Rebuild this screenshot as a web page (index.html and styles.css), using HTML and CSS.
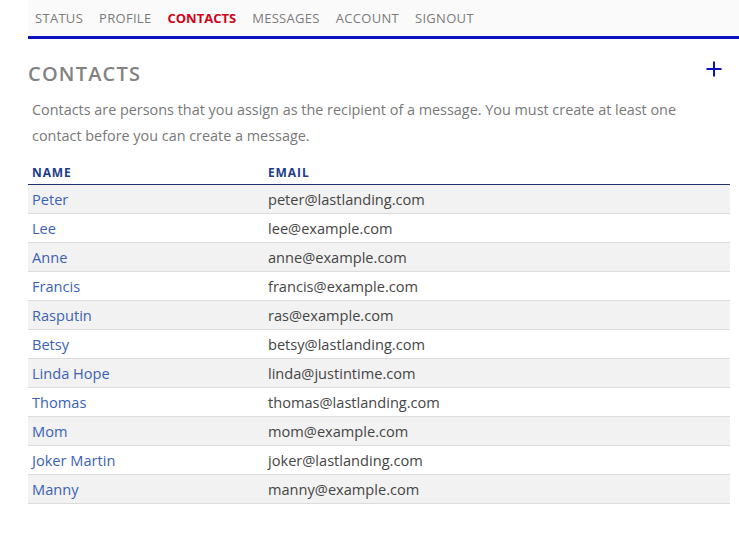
FILE: index.html
```html
<!DOCTYPE html>
<html>
<head>
<meta charset="utf-8">
<link rel="stylesheet" href="styles.css">
</head>
<body>
<div class="page">
  <nav class="nav">
    <a class="nav-item">STATUS</a>
    <a class="nav-item">PROFILE</a>
    <a class="nav-item active">CONTACTS</a>
    <a class="nav-item">MESSAGES</a>
    <a class="nav-item">ACCOUNT</a>
    <a class="nav-item">SIGNOUT</a>
  </nav>
  <main class="content">
    <div class="title-row">
      <h1 class="title">CONTACTS</h1>
      <a class="add" aria-label="Add contact">
        <svg width="16" height="16" viewBox="0 0 16 16"><path d="M8 0.5V15.5M0.5 8H15.5" stroke="#0a0fc4" stroke-width="2" fill="none"/></svg>
      </a>
    </div>
    <p class="intro">Contacts are persons that you assign as the recipient of a message. You must create at least one contact before you can create a message.</p>
    <table class="contacts">
      <thead>
        <tr><th class="col-name">NAME</th><th>EMAIL</th></tr>
      </thead>
      <tbody>
        <tr><td><a class="name">Peter</a></td><td>peter@lastlanding.com</td></tr>
        <tr><td><a class="name">Lee</a></td><td>lee@example.com</td></tr>
        <tr><td><a class="name">Anne</a></td><td>anne@example.com</td></tr>
        <tr><td><a class="name">Francis</a></td><td>francis@example.com</td></tr>
        <tr><td><a class="name">Rasputin</a></td><td>ras@example.com</td></tr>
        <tr><td><a class="name">Betsy</a></td><td>betsy@lastlanding.com</td></tr>
        <tr><td><a class="name">Linda Hope</a></td><td>linda@justintime.com</td></tr>
        <tr><td><a class="name">Thomas</a></td><td>thomas@lastlanding.com</td></tr>
        <tr><td><a class="name">Mom</a></td><td>mom@example.com</td></tr>
        <tr><td><a class="name">Joker Martin</a></td><td>joker@lastlanding.com</td></tr>
        <tr><td><a class="name">Manny</a></td><td>manny@example.com</td></tr>
      </tbody>
    </table>
  </main>
</div>
</body>
</html>
```
FILE: styles.css
```css
* { box-sizing: border-box; }
html, body { margin: 0; padding: 0; background: #ffffff; }
body { font-family: "Open Sans", "Noto Sans", "Liberation Sans", sans-serif; }

.page { padding-left: 28px; }

.nav {
  display: flex;
  gap: 16px;
  height: 39px;
  padding-left: 7px;
  background: #fafafa;
  border-bottom: 3px solid #0b10bf;
}
.nav-item {
  font-size: 13px;
  line-height: 36px;
  letter-spacing: 0.3px;
  color: #7a7a7a;
  text-decoration: none;
}
.nav-item.active { color: #d0021b; font-weight: 700; letter-spacing: 0; }

.content { width: 702px; }

.title-row {
  display: flex;
  justify-content: space-between;
  align-items: center;
  margin-top: 21px;
  padding-right: 8px;
}
.title {
  margin: 0;
  font-size: 20px;
  line-height: 28px;
  font-weight: 600;
  letter-spacing: 1.2px;
  color: #828282;
}
.add { display: flex; margin-top: -10px; }

.intro {
  margin: 9px 0 0;
  padding: 0 12px 0 4px;
  font-size: 14.4px;
  line-height: 26px;
  color: #787878;
}

.contacts {
  width: 100%;
  margin-top: 16px;
  border-collapse: collapse;
}
.contacts th {
  text-align: left;
  padding: 0 4px 3px;
  font-size: 12px;
  line-height: 16px;
  font-weight: 700;
  letter-spacing: 0.9px;
  color: #1e3c8c;
  border-bottom: 1px solid #1e3070;
}
.contacts th.col-name { width: 236px; }
.contacts td {
  padding: 4px 4px;
  font-size: 14.6px;
  line-height: 20px;
  color: #454545;
  border-bottom: 1px solid #dcdcdc;
}
.contacts tbody tr:nth-child(odd) { background: #f2f2f2; }
.name { color: #3b62b5; text-decoration: none; }
```
